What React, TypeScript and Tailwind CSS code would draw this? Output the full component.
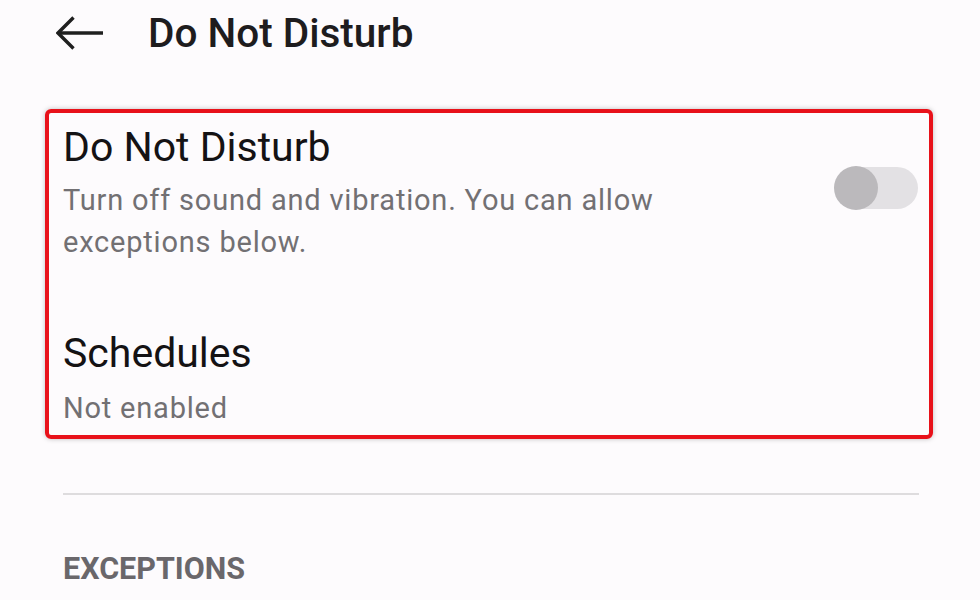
import React from "react";

export default function App() {
  return (
    <div
      className="w-[980px] h-[600px] overflow-hidden bg-[#fdfbfd] relative"
      style={{ fontFamily: "Roboto, 'Noto Sans', sans-serif" }}
    >
      {/* header */}
      <div className="flex items-center h-[66px]">
        <svg width="48" height="34" viewBox="0 0 48 34" className="ml-[56px]" fill="none">
          <path d="M2 17 H47" stroke="#1f1f1f" strokeWidth="3.4" />
          <path d="M17.5 1.5 L2 17 L17.5 32.5" stroke="#1f1f1f" strokeWidth="3.4" strokeLinejoin="miter" />
        </svg>
        <div className="ml-[44px] text-[40.5px] leading-[48px] font-medium text-[#1e1c1e]">Do Not Disturb</div>
      </div>

      {/* highlighted card */}
      <div className="ml-[45px] mt-[43px] w-[888px] h-[330px] border-[4px] border-[#e8111a] rounded-[6px] shadow-[0_0_5px_rgba(0,0,0,0.25)] pl-[14px] pr-[11px] pt-[10px]">
        <div className="flex justify-between">
          <div className="w-[620px]">
            <div className="text-[41px] leading-[48px] text-[#141214]">Do Not Disturb</div>
            <div className="mt-[8px] text-[29px] leading-[42px] tracking-[0.8px] text-[#727073]">
              Turn off sound and vibration. You can allow exceptions below.
            </div>
          </div>
          <div className="relative w-[84px] h-[44px] mt-[43px]">
            <div className="absolute left-[8px] right-0 top-[1px] h-[42px] rounded-full bg-[#e3e1e4]" />
            <div className="absolute left-0 top-0 w-[44px] h-[44px] rounded-full bg-[#bbb9bc]" />
          </div>
        </div>
        <div className="mt-[66px] text-[41px] leading-[48px] text-[#141214]">Schedules</div>
        <div className="mt-[10px] text-[29px] leading-[42px] tracking-[0.8px] text-[#727073]">Not enabled</div>
      </div>

      {/* divider */}
      <div className="ml-[63px] mt-[54px] w-[856px] h-[2px] bg-[#dedcde]" />

      {/* exceptions */}
      <div className="ml-[63px] mt-[54px] text-[30.5px] leading-[40px] font-bold text-[#6a676b]">EXCEPTIONS</div>
    </div>
  );
}
